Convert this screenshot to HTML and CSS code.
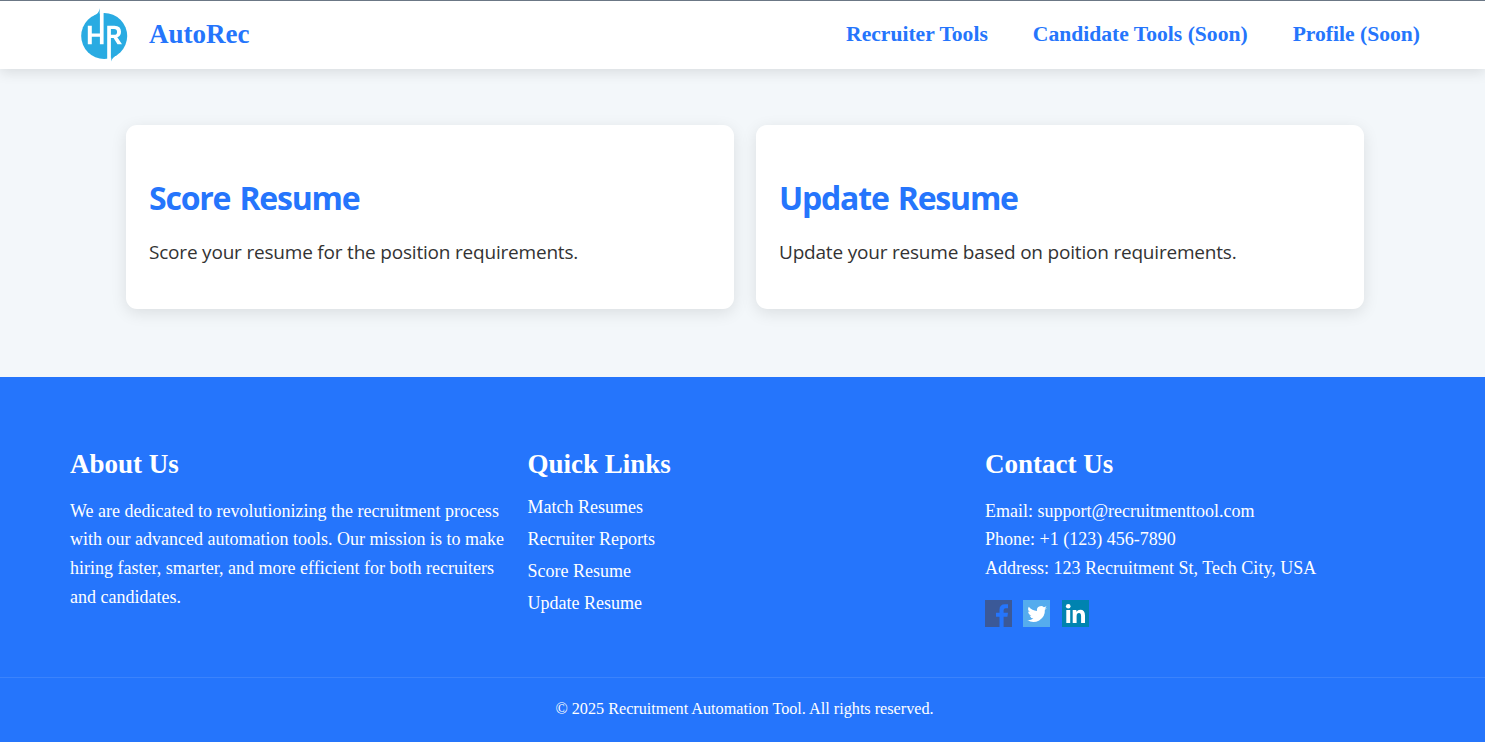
FILE: index.html
```html
<!DOCTYPE html>
<html lang="en">
<head>
<meta charset="utf-8">
<title>AutoRec</title>
<link rel="stylesheet" href="styles.css">
</head>
<body>
<header class="header">
  <a class="brand">
    <svg class="logo" viewBox="0 0 48 54" width="48" height="54">
      <circle cx="24.200" cy="28" r="23" fill="#29abe2"/>
      <path d="M14 8Q19 5.500 19.700 .3V9ZM37 47Q32 49.500 31.200 53.500V46Z" fill="#29abe2"/>
      <path d="M19.900 4H23.600V36.300H19.900V28.800H11.800V36.300H7.800V17.700H11.800V25.600H19.900Z" fill="#fff"/>
      <path fill-rule="evenodd" d="M27.200 17.700H34.500Q41 17.700 41 23.700Q41 28 37.300 29.300L42 36.300H37.500L33.600 30H30.900V52H27.200ZM30.900 21V26.800H34Q37.100 26.800 37.100 23.900Q37.100 21 34 21Z" fill="#fff"/>
    </svg>
    <span class="brand-name">AutoRec</span>
  </a>
  <nav class="nav"><a>Recruiter Tools</a><a>Candidate Tools (Soon)</a><a>Profile (Soon)</a></nav>
</header>
<main class="cards">
  <section class="card"><h2>Score Resume</h2><p>Score your resume for the position requirements.</p></section>
  <section class="card"><h2>Update Resume</h2><p>Update your resume based on poition requirements.</p></section>
</main>
<footer class="footer">
  <div class="columns">
    <section class="column"><h3>About Us</h3><p>We are dedicated to revolutionizing the recruitment process with our advanced automation tools. Our mission is to make hiring faster, smarter, and more efficient for both recruiters and candidates.</p></section>
    <section class="column"><h3>Quick Links</h3><ul><li>Match Resumes</li><li>Recruiter Reports</li><li>Score Resume</li><li>Update Resume</li></ul></section>
    <section class="column"><h3>Contact Us</h3><p>Email: support@recruitmenttool.com</p><p>Phone: +1 (123) 456-7890</p><p>Address: 123 Recruitment St, Tech City, USA</p>
      <div class="social">
        <svg viewBox="0 0 27 27"><path d="M0 0H27V27H0Z" fill="#3b5998"/><path d="M14.500 27V16.700H11V12.700H14.500V9.700Q14.500 4.200 20 4.200H23V8.200H20.700Q18.600 8.200 18.600 10.200V12.700H23L22.400 16.700H18.600V27Z" fill="#2575fc"/></svg>
        <svg viewBox="0 0 27 27"><path d="M0 0H27V27H0Z" fill="#55acee"/><path transform="translate(2.300 3.200) scale(.94)" d="M23 5a9 9 0 0 1-2.400.7 4.300 4.300 0 0 0 1.900-2.400 8 8 0 0 1-2.700 1A4.300 4.300 0 0 0 12.500 8.200 12 12 0 0 1 3.700 3.700a4.300 4.300 0 0 0 1.300 5.700 4 4 0 0 1-1.900-.5 4.300 4.300 0 0 0 3.400 4.200 4 4 0 0 1-1.900.1 4.300 4.300 0 0 0 4 3A9 9 0 0 1 2 18 12.200 12.200 0 0 0 20.800 7 9 9 0 0 0 23 5Z" fill="#fff"/></svg>
        <svg viewBox="0 0 27 27"><path d="M0 0H27V27H0Z" fill="#0083b0"/><path d="M4.300 10H8.200V23H4.300ZM10.700 10H14.400V11.800Q15.700 9.700 18.300 9.700Q23 9.700 23 15.500V23H19.100V16.300Q19.100 13 17 13Q14.600 13 14.600 16.300V23H10.700Z" fill="#fff"/><circle cx="6.250" cy="6.300" r="2.300" fill="#fff"/></svg>
      </div>
    </section>
  </div>
  <div class="copyright">© 2025 Recruitment Automation Tool. All rights reserved.</div>
</footer>
</body>
</html>
```
FILE: styles.css
```css
* { box-sizing: border-box; margin: 0; padding: 0; }
body { background: #fff; font-family: "Liberation Serif", serif; }
.header { height: 69px; border-top: 1px solid #6b7785; background: #fff; display: flex; align-items: center; justify-content: space-between; padding: 0 65px 2px 80px; box-shadow: 0 4px 12px rgba(0,0,0,.1); position: relative; }
.brand { display: flex; align-items: center; gap: 21px; color: #2575fc; }
.logo { flex: none; margin-top: 2px; }
.brand-name { font-size: 27px; font-weight: 700; }
.nav { display: flex; gap: 45px; font-size: 21.600px; font-weight: 700; color: #2575fc; }
.cards { height: 308px; background: #f3f7fa; padding: 56px 121px 68px 126px; display: grid; grid-template-columns: 1fr 1fr; gap: 22px; }
.card { background: #fff; border-radius: 11px; padding: 49px 23px 43px; box-shadow: 0 4px 16px rgba(0,0,0,.1); font-family: "Open Sans", "Noto Sans", sans-serif; }
.card h2 { font-size: 32px; line-height: 48px; letter-spacing: -1.200px; word-spacing: 2px; color: #2575fc; }
.card p { font-size: 19px; line-height: 28px; letter-spacing: -.2px; color: #333; margin-top: 16px; white-space: nowrap; }
.footer { height: 365px; background: #2575fc; color: #fff; }
.columns { height: 300px; padding: 68px 65px 0 70px; display: grid; grid-template-columns: 435px 435px 435px; gap: 22.500px; }
.column h3 { font-size: 27px; line-height: 38px; margin-bottom: 13.700px; }
.column p, .column li { font-size: 18px; line-height: 28.700px; }
.column ul { list-style: none; margin-top: -5.700px; }
.column .social { display: flex; gap: 11.300px; margin-top: 17.300px; }
.column li { line-height: 32px; }
.social svg { width: 27px; height: 27px; }
.copyright { height: 65px; border-top: 1px solid #3b83fc; text-align: center; font-size: 16.200px; line-height: 62px; padding-left: 4px; }
```
